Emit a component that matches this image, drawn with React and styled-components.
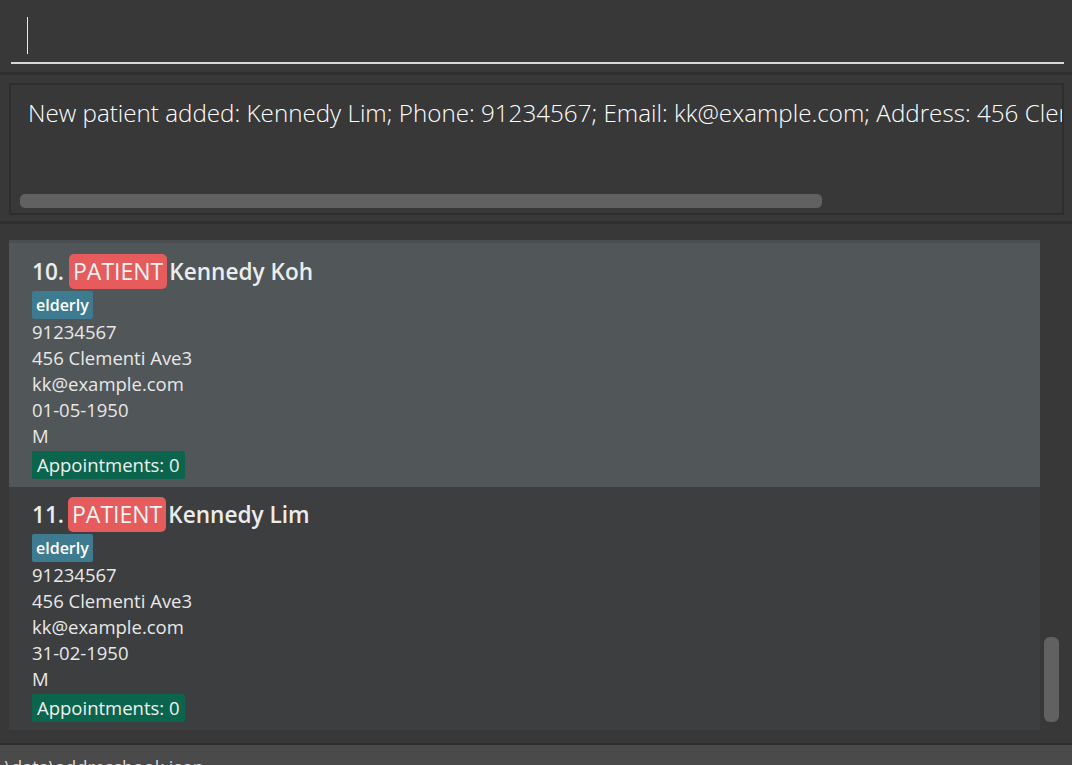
import React from "react";
import styled, { createGlobalStyle } from "styled-components";

const Global = createGlobalStyle`
  html, body { margin: 0; padding: 0; background: #383838; }
  body { width: 1072px; height: 765px; overflow: hidden; }
`;

const Window = styled.div`
  width: 1072px;
  height: 765px;
  background: #383838;
  display: flex;
  flex-direction: column;
  font-family: "Open Sans", "Noto Sans", sans-serif;
  color: #ffffff;
  overflow: hidden;
`;

const CommandBox = styled.div`
  height: 72px;
  padding: 0 8px 8px 11px;
  box-sizing: border-box;
  display: flex;
  flex-direction: column;
  justify-content: flex-end;
`;

const CommandField = styled.div`
  height: 47px;
  border-bottom: 2px solid #d6d6d6;
  display: flex;
  align-items: flex-start;
  padding-left: 16px;
  box-sizing: border-box;
`;

const Caret = styled.span`
  display: block;
  width: 1px;
  height: 37px;
  background: #e8e8e8;
`;

const Divider = styled.div`
  height: 3px;
  background: #2f2f2f;
`;

const ResultArea = styled.div`
  padding: 8px 8px 6px 9px;
`;

const ResultPanel = styled.div`
  height: 132px;
  border: 2px solid #2e2e2e;
  box-sizing: border-box;
  background: #383838;
  display: flex;
  flex-direction: column;
  overflow: hidden;
`;

const ResultText = styled.div`
  font-family: "Open Sans", sans-serif;
  font-weight: 300;
  font-size: 24.2px;
  color: #ffffff;
  white-space: nowrap;
  overflow: hidden;
  padding: 13px 0 0 17px;
  line-height: 30px;
  flex: 1;
`;

const HScrollBar = styled.div`
  width: 802px;
  height: 14px;
  margin: 0 0 5px 9px;
  border-radius: 5px;
  background: #616161;
`;

const ListArea = styled.div`
  flex: 1;
  display: flex;
  padding: 16px 0 14px 0;
  min-height: 0;
`;

const Cards = styled.div`
  width: 1031px;
  margin-left: 9px;
  display: flex;
  flex-direction: column;
  border-top: 3px solid #4a4e50;
`;

const Card = styled.div`
  background: ${(p) => (p.$odd ? "#515658" : "#3c3e3f")};
  padding: ${(p) => (p.$odd ? "11px" : "10px")} 0 8px 23px;
  display: flex;
  flex-direction: column;
  align-items: flex-start;
`;

const Header = styled.div`
  display: flex;
  align-items: center;
  height: 35px;
  font-size: 22.6px;
  font-weight: 600;
  color: #ececec;
`;

const Index = styled.span`
  margin-right: ${(p) => p.$gap}px;
`;

const RoleBadge = styled.span`
  background: #e65b5c;
  color: #f4f4f4;
  font-weight: 400;
  font-size: 23px;
  border-radius: 5px;
  height: 35px;
  line-height: 35px;
  padding: 0 4px;
  margin-right: 2px;
`;

const Tag = styled.span`
  margin-top: 2px;
  background: #3e7b91;
  color: #ffffff;
  font-size: 16px;
  font-weight: 600;
  height: 28px;
  line-height: 28px;
  padding: 0 4px;
  border-radius: 2px;
`;

const Line = styled.div`
  font-size: 18.5px;
  line-height: 26px;
  height: 26px;
  color: #e8e8e8;
`;

const ApptBadge = styled.span`
  margin-top: 2px;
  background: #0b654c;
  color: #f0f0f0;
  font-size: 18.5px;
  height: 28px;
  line-height: 28px;
  padding: 0 5px;
  border-radius: 2px;
`;

const Track = styled.div`
  flex: 1;
  display: flex;
  flex-direction: column;
  align-items: flex-start;
  padding-left: 4px;
`;

const Thumb = styled.div`
  width: 15px;
  height: 85px;
  margin-top: 397px;
  border-radius: 6px;
  background: #616161;
`;

const StatusBar = styled.div`
  height: 20px;
  border-top: 2px solid #2e2e2e;
  background: #4a4a4a;
  color: #d8d8d8;
  font-size: 18px;
  line-height: 22px;
  overflow: hidden;
  white-space: nowrap;
`;

const StatusText = styled.div`
  padding-top: 11px;
`;

const patients = [
  { idx: "10.", gap: 5, name: "Kennedy Koh", dob: "01-05-1950", odd: true },
  { idx: "11.", gap: 4, name: "Kennedy Lim", dob: "31-02-1950", odd: false },
];

export default function App() {
  return (
    <Window>
      <Global />
      <CommandBox>
        <CommandField>
          <Caret />
        </CommandField>
      </CommandBox>
      <Divider />
      <ResultArea>
        <ResultPanel>
          <ResultText>
            New patient added: Kennedy Lim; Phone: 91234567; Email: kk@example.com; Address: 456 Clementi Ave3; Date of Birth: 31-02-1950; Gender: M; Tags: [elderly]
          </ResultText>
          <HScrollBar />
        </ResultPanel>
      </ResultArea>
      <Divider />
      <ListArea>
        <Cards>
          {patients.map((p) => (
            <Card key={p.idx} $odd={p.odd}>
              <Header>
                <Index $gap={p.gap}>{p.idx}</Index>
                <RoleBadge>PATIENT</RoleBadge>
                <span>{p.name}</span>
              </Header>
              <Tag>elderly</Tag>
              <Line>91234567</Line>
              <Line>456 Clementi Ave3</Line>
              <Line>kk@example.com</Line>
              <Line>{p.dob}</Line>
              <Line>M</Line>
              <ApptBadge>Appointments: 0</ApptBadge>
            </Card>
          ))}
        </Cards>
        <Track>
          <Thumb />
        </Track>
      </ListArea>
      <StatusBar>
        <StatusText>.\data\addressbook.json</StatusText>
      </StatusBar>
    </Window>
  );
}
